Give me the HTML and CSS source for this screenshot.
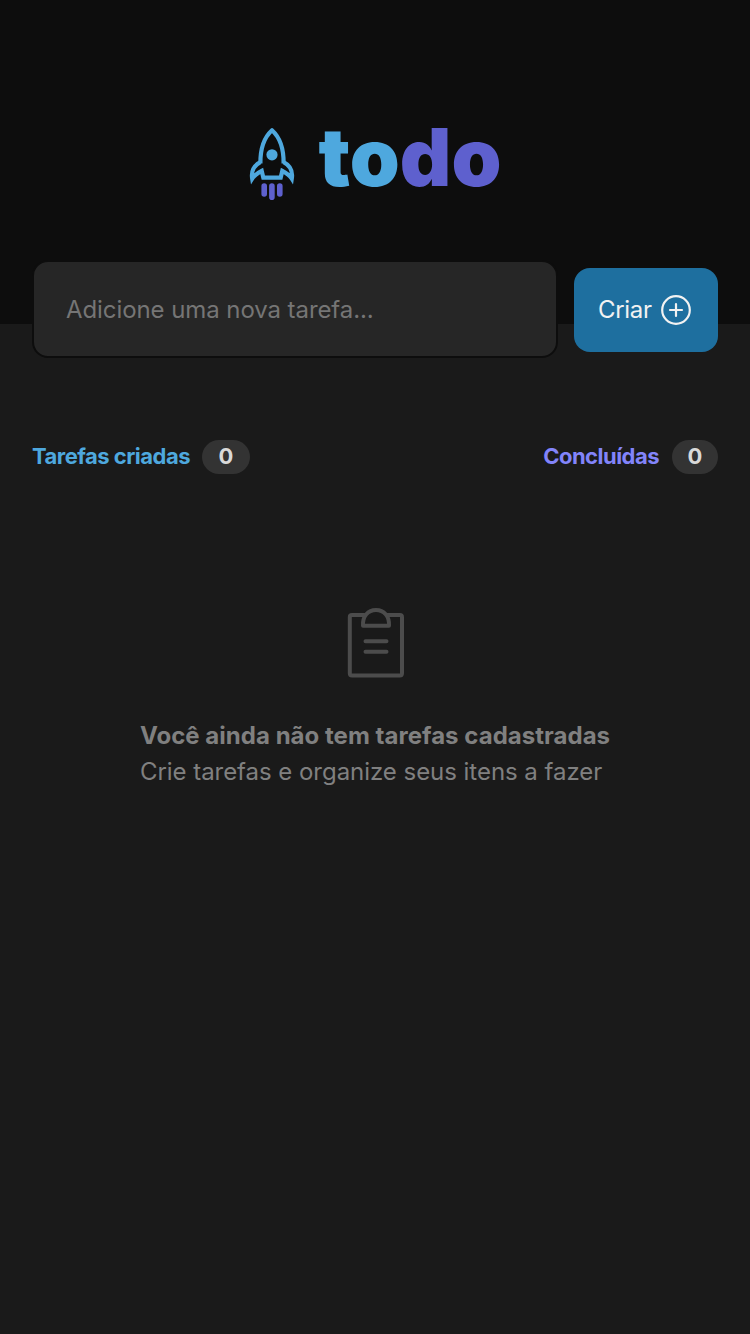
FILE: index.html
```html
<!DOCTYPE html>
<html lang="pt-BR">
<head>
<meta charset="utf-8">
<title>todo</title>
<link rel="stylesheet" href="styles.css">
</head>
<body>
<header class="header">
  <div class="logo">
    <svg class="rocket" width="46" height="76" viewBox="0 0 46 76" fill="none">
      <path d="M11.4 37.5C11.2 22 15.5 11 23 4.2C30.5 11 34.8 22 34.6 37.5" stroke="#4ea8de" stroke-width="4.2" stroke-linejoin="round"/>
      <path d="M11.4 36.2C5 39.5 2 45 3.2 52.6C5.8 48.5 8.5 47 12.7 44.8L14.3 51.6H31.7L33.3 44.8C37.5 47 40.2 48.5 42.8 52.6C44 45 41 39.5 34.6 36.2" stroke="#4ea8de" stroke-width="4.2"/>
      <circle cx="23" cy="28.8" r="5.6" fill="#4ea8de"/>
      <path d="M15.2 60V68M22.9 60V71.2M30.8 60V68" stroke="#5e60ce" stroke-width="5.6" stroke-linecap="round"/>
    </svg>
    <h1 class="logo-text">to<span class="logo-accent">do</span></h1>
  </div>
</header>
<main class="content">
  <form class="new-task">
    <input class="task-input" type="text" placeholder="Adicione uma nova tarefa...">
    <button class="create" type="button"><span class="create-label">Criar</span>
      <svg width="32" height="32" viewBox="0 0 32 32" fill="none" stroke="#f2f2f2" stroke-width="2.2">
        <circle cx="16" cy="16" r="13.8"/>
        <path d="M16 10V22M10 16H22" stroke-linecap="round"/>
      </svg>
    </button>
  </form>
  <div class="summary">
    <div class="stat created"><strong>Tarefas criadas</strong><span class="count">0</span></div>
    <div class="stat done"><strong>Concluídas</strong><span class="count">0</span></div>
  </div>
  <section class="empty">
    <svg class="clipboard" width="60" height="72" viewBox="0 0 60 72" fill="none" stroke="#4c4c4c" stroke-width="4" stroke-linecap="round" stroke-linejoin="round">
      <path d="M19.5 8H7Q4.8 8 4.8 10.2V66.3Q4.8 68.5 7 68.5H54.8Q57 68.5 57 66.3V10.2Q57 8 54.8 8H42.5"/>
      <path d="M18 18.7C17.5 9 23 3 31 3S44.5 9 44 18.7Z"/>
      <path d="M20.5 34.3H41.5M20.5 44.8H41.5"/>
    </svg>
    <div class="empty-text">
      <p class="empty-title">Você ainda não tem tarefas cadastradas</p>
      <p class="empty-hint">Crie tarefas e organize seus itens a fazer</p>
    </div>
  </section>
</main>
</body>
</html>
```

FILE: styles.css
```css
* { box-sizing: border-box; margin: 0; padding: 0; }
body {
  min-height: 1334px;
  background: #1a1a1a;
  font-family: "Inter", sans-serif;
}
.header {
  height: 324px;
  padding-top: 126px;
  background: #0d0d0d;
}
.logo {
  display: flex;
  justify-content: center;
  gap: 24px;
  height: 76px;
}
.logo-text {
  font-size: 80px;
  line-height: 62px;
  font-weight: 900;
  color: #4ea8de;
}
.logo-accent { color: #5e60ce; }
.content { padding: 0 32px; }
.new-task {
  display: flex;
  align-items: center;
  gap: 16px;
  margin-top: -64px;
}
.task-input {
  width: 526px;
  height: 98px;
  padding: 0 32px;
  border: 2px solid #0d0d0d;
  border-radius: 16px;
  background: #262626;
  color: #f2f2f2;
  font: 400 24px "Inter", sans-serif;
  letter-spacing: -0.08px;
}
.task-input::placeholder { color: #757575; }
.create {
  display: flex;
  align-items: center;
  gap: 8px;
  width: 144px;
  height: 84px;
  margin-top: 2px;
  padding-left: 24px;
  border: 0;
  border-radius: 16px;
  background: #1e6f9f;
  color: #f2f2f2;
  font: 400 24px "Inter", sans-serif;
  letter-spacing: -0.3px;
}
.create-label { padding-bottom: 2px; }
.summary {
  display: flex;
  justify-content: space-between;
  margin-top: 82px;
}
.stat {
  display: flex;
  align-items: center;
  gap: 12px;
  font-size: 22px;
  line-height: 26px;
}
.stat strong {
  margin-top: -2px;
  letter-spacing: -0.52px;
}
.created { color: #4ea8de; }
.done { gap: 13px; color: #8284fa; }
.count {
  min-width: 46px;
  padding: 3px 0 5px;
  border-radius: 17px;
  background: #333;
  color: #d9d9d9;
  font-weight: 700;
  text-align: center;
}
.created .count { min-width: 48px; }
.empty {
  display: flex;
  flex-direction: column;
  align-items: center;
  margin-top: 133px;
}
.empty-text {
  margin-top: 39px;
  color: #808080;
  font-size: 24px;
  line-height: 36px;
}
.empty-title { font-weight: 700; letter-spacing: 0.03px; }
.empty-hint { letter-spacing: -0.04px; }
```
